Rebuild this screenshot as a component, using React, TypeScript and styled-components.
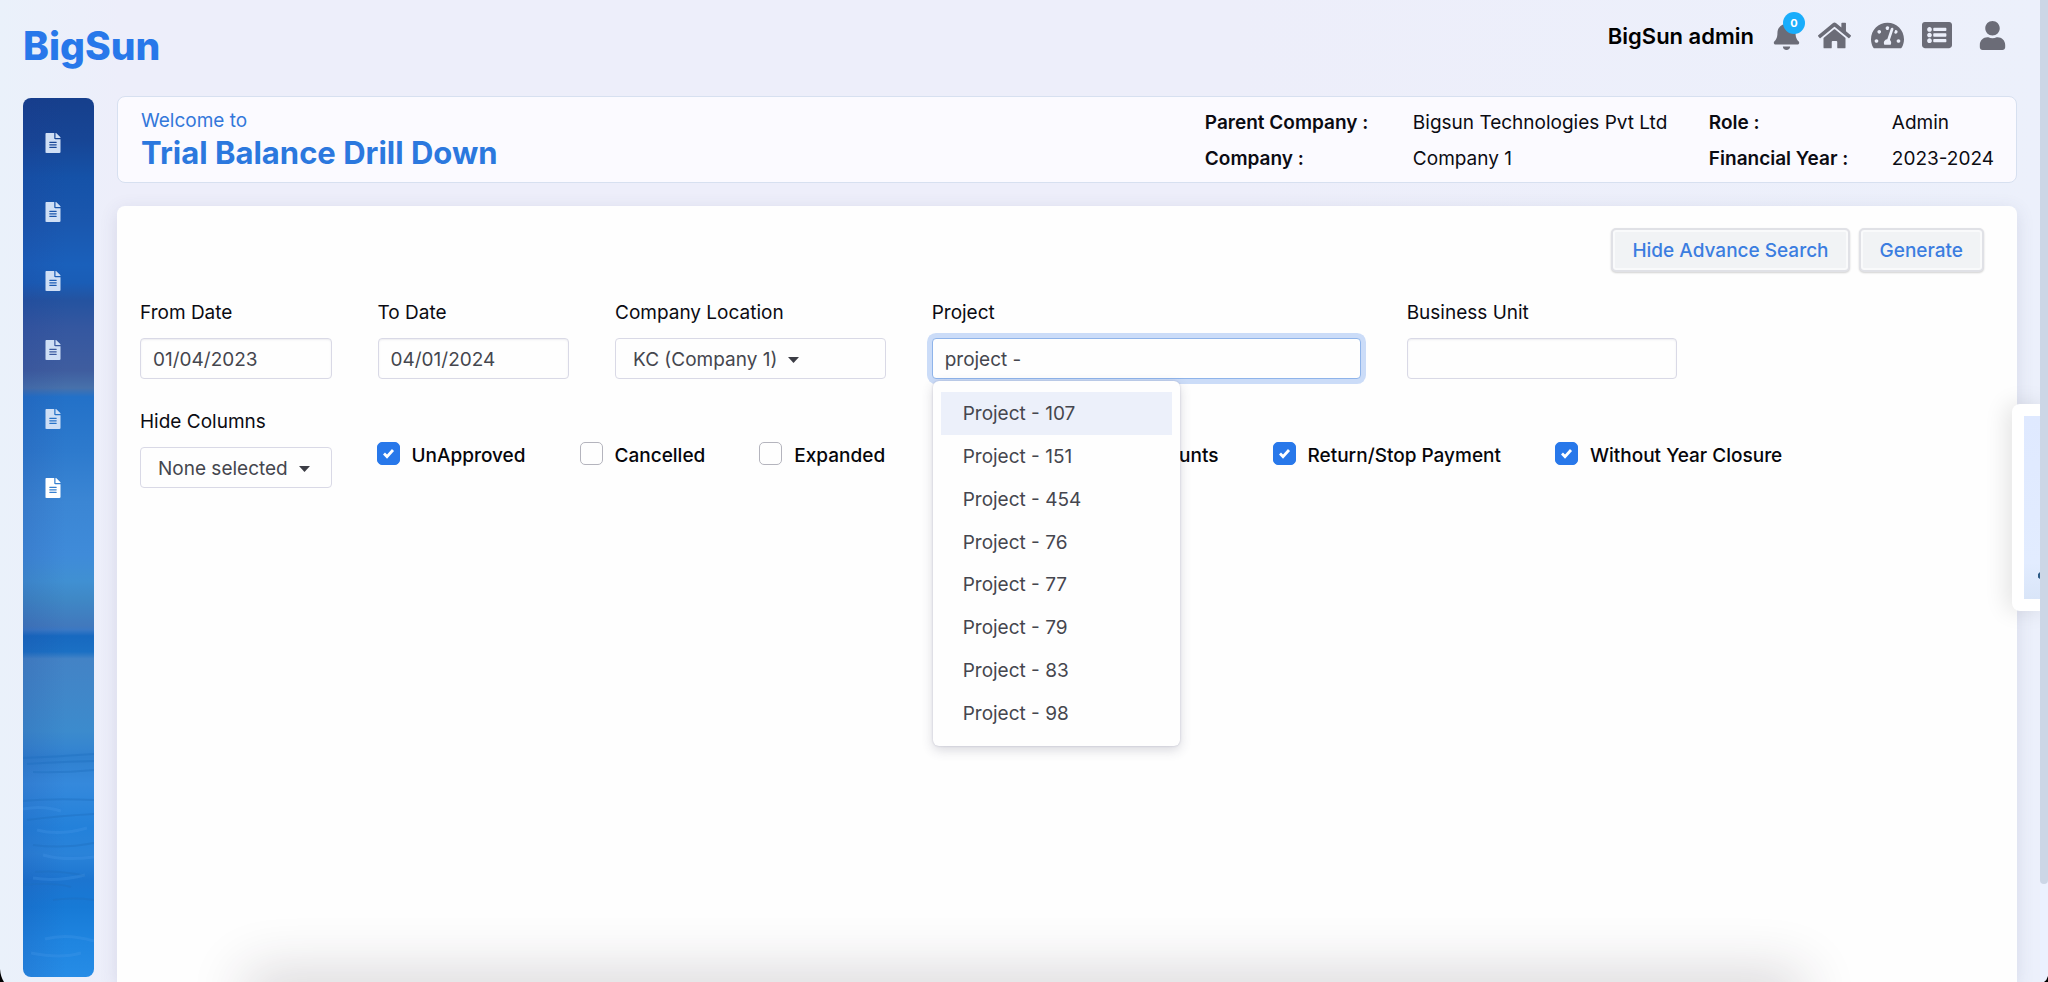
import React, { useState } from "react";
import styled, { createGlobalStyle } from "styled-components";
import { FaBell, FaFileAlt, FaHome, FaListAlt, FaTachometerAlt, FaUser } from "react-icons/fa";

const ink = "#0b0b12";
const fieldInk = "#45464e";

const GlobalStyle = createGlobalStyle`
  *, *::before, *::after { box-sizing: border-box; }
  body {
    margin: 0;
    overflow: hidden;
    background: #ecf0fa;
    color: ${ink};
    font: 400 19px/28px Inter, "Liberation Sans", sans-serif;
  }
  button, input, select { font: inherit; color: inherit; }
`;

const Page = styled.div`
  position: relative;
  display: flex;
  flex-direction: column;
  height: 100vh;
  padding: 0 31px 0 23px;
  overflow: hidden;
  background: linear-gradient(90deg, #eaf1fa 0, #edeefa 120px, #edeefa 60%, #ecf0fb 100%);
`;

const TopBar = styled.header`
  display: flex;
  justify-content: space-between;
  height: 96px;
  flex: none;
`;

const Brand = styled.a`
  padding-top: 22px;
  color: #2878ea;
  font-size: 39px;
  font-weight: 800;
  line-height: 48px;
  text-decoration: none;
`;

const UserNav = styled.nav`
  display: flex;
  align-items: center;
  height: 70px;
  padding-right: 10px;
`;

const UserName = styled.span`
  margin-right: 18px;
  padding-top: 2px;
  color: #000;
  font-size: 22px;
  font-weight: 600;
`;

const IconLink = styled.a<{ $gap?: number }>`
  position: relative;
  display: flex;
  margin-right: ${(p) => p.$gap ?? 0}px;
  color: #6b6c77;
`;

const Badge = styled.span`
  position: absolute;
  top: -9px;
  right: -4px;
  width: 22px;
  height: 22px;
  border-radius: 50%;
  background: #19adfb;
  color: #fff;
  font-size: 11px;
  font-weight: 700;
  line-height: 22px;
  text-align: center;
`;

const Body = styled.div`
  display: flex;
  flex: 1;
  gap: 23px;
  min-height: 0;
`;

const Sidebar = styled.nav`
  position: relative;
  flex: none;
  display: flex;
  flex-direction: column;
  gap: 49px;
  width: 71px;
  margin: 2px 0 5px;
  padding: 35px 0 0 22px;
  border-radius: 8px;
  overflow: hidden;
  background:
    linear-gradient(90deg, rgba(30, 50, 140, 0.14), transparent 60%),
    linear-gradient(
      #163f8c 0, #174696 5%, #1552a8 9%, #1a57ae 14%, #1a60bb 19%, #1a5db6 21%,
      #2453a0 23%, #3457a0 26%, #3f5d9f 31%, #4771ab 33%, #2371c8 34%, #2d7acd 40%,
      #3b86d4 46%, #3f8bd9 52%, #4090d2 55%, #3f88c6 57%, #4179bd 60%, #3a78c4 60.5%,
      #1769c0 61.2%, #1b70c4 63%, #4383c6 63.8%, #4087c9 68%, #3c8bcd 72%,
      #3585d0 74%, #2f80cf 75%, #3589dc 78%, #2381da 83%, #2a83d9 86%, #1c75d0 89%,
      #177ad6 92%, #1f85e0 96%, #268ce6 100%
    );
`;

const Ripples = styled.svg`
  position: absolute;
  left: 0;
  bottom: 0;
`;

const SideLink = styled.a<{ $active?: boolean }>`
  display: flex;
  width: 16px;
  color: ${(p) => (p.$active ? "#fff" : "#cfdff5")};
`;

const Main = styled.main`
  flex: 1;
  display: flex;
  flex-direction: column;
  gap: 23px;
  min-width: 0;
`;

const Welcome = styled.section`
  display: flex;
  justify-content: space-between;
  flex: none;
  height: 87px;
  padding: 8px 22px 0 23px;
  border: 1px solid #d7e0f0;
  border-radius: 8px;
  background: #fbfaff;
`;

const Greeting = styled.p`
  margin: 4px 0 0;
  color: #3377da;
  line-height: 24px;
`;

const Title = styled.h1`
  margin: 0;
  color: #2b78de;
  font-size: 31px;
  font-weight: 700;
  line-height: 40px;
`;

const Facts = styled.dl`
  display: grid;
  grid-template-columns: 208px 296px 183px auto;
  grid-auto-rows: 36px;
  margin: 0;
  line-height: 36px;
`;

const FactName = styled.dt`
  font-weight: 600;
`;

const FactValue = styled.dd`
  margin: 0;
`;

const Panel = styled.section`
  position: relative;
  flex: 1;
  padding-top: 22px;
  border-radius: 8px 8px 0 0;
  background: #fefefe;
  box-shadow: 0 4px 18px rgba(60, 70, 110, 0.13);
`;

const Actions = styled.div`
  display: flex;
  justify-content: flex-end;
  gap: 9px;
  margin-bottom: 27px;
  padding-right: 33px;
`;

const ActionButton = styled.button`
  height: 44px;
  padding: 1px 19px 0;
  border: 2px solid #e0e1e6;
  border-radius: 5px;
  background: #f1f3f5;
  box-shadow: 0 1px 2px rgba(0, 0, 0, 0.18), inset 0 0 0 2px #f9fafb;
  color: #3b7de0;
  font-weight: 500;
`;

const Row = styled.div`
  display: flex;
  margin-bottom: 29px;
`;

const Field = styled.div<{ $share: number }>`
  position: relative;
  flex: 0 0 calc(100% * ${(p) => p.$share} / 24);
  display: flex;
  flex-direction: column;
  gap: 11px;
  padding: 0 23px;
`;

const TextInput = styled.input`
  width: 100%;
  height: 41px;
  padding: 2px 12px 0;
  border: 1px solid #d9d9e6;
  border-radius: 4px;
  outline: none;
  background: #fefefe;
  color: ${fieldInk};
  box-shadow: inset 0 1px 2px rgba(80, 80, 120, 0.1);

  &[aria-expanded="true"] {
    border-color: #8fb4ea;
    box-shadow: 0 0 0 5px #cbdcf8;
  }
`;

const SelectBox = styled.div`
  display: flex;
  align-items: center;
  gap: 11px;
  height: 41px;
  padding: 2px 17px 0;
  border: 1px solid #d9d9e6;
  border-radius: 4px;
  color: ${fieldInk};
`;

const Select = styled.select`
  appearance: none;
  field-sizing: content;
  padding: 0;
  border: 0;
  outline: none;
  background: none;
`;

const Menu = styled.ul`
  position: absolute;
  z-index: 2;
  top: calc(100% + 2px);
  left: 24px;
  display: flex;
  flex-direction: column;
  width: 247px;
  height: 365px;
  margin: 0;
  padding: 11px 8px 12px;
  border-radius: 6px;
  background: #fefefe;
  box-shadow: 0 4px 12px rgba(60, 60, 90, 0.2), 0 0 2px rgba(60, 60, 110, 0.25);
  list-style: none;
`;

const Option = styled.li`
  flex: 1;
  display: flex;
  align-items: center;
  padding: 2px 22px 0;
  color: ${fieldInk};
  white-space: nowrap;

  &[aria-selected="true"] {
    background: #ecf0fa;
  }
`;

const Checks = styled.div`
  display: flex;
  flex: 1;
  gap: 54px;
  padding: 34px 22px 0;
`;

const CheckLabel = styled.label`
  display: flex;
  align-items: flex-start;
  gap: 12px;
  height: 28px;
  color: #06060a;
  font-weight: 500;
  white-space: nowrap;
`;

const Tick = styled.span`
  display: grid;
  place-items: center;

  > * { grid-area: 1 / 1; }
  > svg { pointer-events: none; }
`;

const CheckInput = styled.input`
  appearance: none;
  width: 23px;
  height: 23px;
  margin: 0;
  border: 1px solid #b4b4bd;
  border-radius: 5px;
  background: #fefefe;

  &:checked {
    border-color: #2878ea;
    background: #2878ea;
  }
`;

const SideCard = styled.aside`
  position: absolute;
  z-index: 3;
  right: 0;
  top: 404px;
  width: 36px;
  height: 207px;
  padding: 12px 8px 12px 12px;
  border-radius: 8px 0 0 8px;
  background: #fff;
  box-shadow: -6px 0 22px rgba(0, 0, 0, 0.1);
`;

const SideCardFill = styled.div`
  display: flex;
  justify-content: flex-end;
  align-items: flex-end;
  height: 100%;
  padding-bottom: 20px;
  background: linear-gradient(#dfe9ff, #e2ecff 80%, #d9e5f8);
`;

const ScrollTrack = styled.div`
  position: absolute;
  z-index: 4;
  top: 0;
  right: 0;
  bottom: 0;
  width: 8px;
  background: #ebf1fe;
`;

const ScrollThumb = styled.div`
  height: 90%;
  border-radius: 0 0 4px 4px;
  background: #ccd6e6;
`;

const BottomShade = styled.div`
  position: absolute;
  z-index: 3;
  left: 13%;
  right: 13%;
  bottom: -20px;
  height: 10px;
  box-shadow: 0 0 55px 20px rgba(40, 30, 50, 0.19);
`;

const Corner = styled.svg<{ $side: "left" | "right" }>`
  position: absolute;
  z-index: 5;
  bottom: 0;
  ${(p) => p.$side}: 0;
`;

const Caret = () => (
  <svg width="11" height="6" viewBox="0 0 11 6" aria-hidden="true">
    <path d="M0 0h11L5.5 6z" fill="#3c3d45" />
  </svg>
);

const sideItems = ["Masters", "Transactions", "Vouchers", "Ledgers", "Statements", "Reports"];

const facts = [
  ["Parent Company :", "Bigsun Technologies Pvt Ltd"],
  ["Role :", "Admin"],
  ["Company :", "Company 1"],
  ["Financial Year :", "2023-2024"],
];

const projects = ["107", "151", "454", "76", "77", "79", "83", "98"];

const checks: [string, boolean][] = [
  ["UnApproved", true],
  ["Cancelled", false],
  ["Expanded", false],
  ["Show Zero Value Accounts", false],
  ["Return/Stop Payment", true],
  ["Without Year Closure", true],
];

function Check({ label, initial }: { label: string; initial: boolean }) {
  const [on, setOn] = useState(initial);
  return (
    <CheckLabel>
      <Tick>
        <CheckInput type="checkbox" checked={on} onChange={() => setOn(!on)} />
        {on && (
          <svg width="13" height="11" viewBox="0 0 13 11" aria-hidden="true">
            <path d="M2 5.6 5 8.6 11 2" fill="none" stroke="#fff" strokeWidth="2.8" />
          </svg>
        )}
      </Tick>
      {label}
    </CheckLabel>
  );
}

export default function App() {
  const [project, setProject] = useState("project -");
  return (
    <>
      <GlobalStyle />
      <Page>
        <TopBar>
          <Brand href="#">BigSun</Brand>
          <UserNav aria-label="User">
            <UserName>BigSun admin</UserName>
            <IconLink href="#" $gap={17} aria-label="Notifications">
              <FaBell size={29} />
              <Badge>0</Badge>
            </IconLink>
            <IconLink href="#" $gap={20} aria-label="Home"><FaHome size={33} /></IconLink>
            <IconLink href="#" $gap={18} aria-label="Dashboard"><FaTachometerAlt size={33} /></IconLink>
            <IconLink href="#" $gap={26} aria-label="List"><FaListAlt size={30} /></IconLink>
            <IconLink href="#" aria-label="Profile"><FaUser size={29} /></IconLink>
          </UserNav>
        </TopBar>
        <Body>
          <Sidebar aria-label="Modules">
            <Ripples width="71" height="260" viewBox="0 0 71 260" fill="none" aria-hidden="true">
              <g stroke="#1d6dbd" strokeOpacity="0.4" strokeWidth="2">
                <path d="M0 41q30-1 71-4M4 47q30-2 67-3M10 55q30 1 61-2M0 84q30-3 71-1" />
                <path d="M4 103q30-4 67-6M10 128q30 4 61-2M12 155q25-2 50 4M0 168q30-3 48 2M30 183q20-3 41 0" />
              </g>
              <g stroke="#4a9bea" strokeOpacity="0.25" strokeWidth="3">
                <path d="M0 92q20-4 38 2M14 113q22 6 50-2M20 138q20 6 51 2M10 161q24 4 52-3M22 222q22-6 49 2M8 236q30 6 50 0" />
              </g>
            </Ripples>
            {sideItems.map((item, i) => (
              <SideLink key={item} href="#" aria-label={item} $active={i === sideItems.length - 1}>
                <FaFileAlt size={20} />
              </SideLink>
            ))}
          </Sidebar>
          <Main>
            <Welcome>
              <div>
                <Greeting>Welcome to</Greeting>
                <Title>Trial Balance Drill Down</Title>
              </div>
              <Facts>
                {facts.map(([name, value]) => (
                  <React.Fragment key={name}>
                    <FactName>{name}</FactName>
                    <FactValue>{value}</FactValue>
                  </React.Fragment>
                ))}
              </Facts>
            </Welcome>
            <Panel>
              <Actions>
                <ActionButton type="button">Hide Advance Search</ActionButton>
                <ActionButton type="button">Generate</ActionButton>
              </Actions>
              <Row>
                <Field $share={3}>
                  <label htmlFor="from">From Date</label>
                  <TextInput id="from" defaultValue="01/04/2023" />
                </Field>
                <Field $share={3}>
                  <label htmlFor="to">To Date</label>
                  <TextInput id="to" defaultValue="04/01/2024" />
                </Field>
                <Field $share={4}>
                  <label htmlFor="location">Company Location</label>
                  <SelectBox>
                    <Select id="location"><option>KC (Company 1)</option></Select>
                    <Caret />
                  </SelectBox>
                </Field>
                <Field $share={6}>
                  <label htmlFor="project">Project</label>
                  <TextInput
                    id="project"
                    role="combobox"
                    aria-expanded="true"
                    aria-controls="project-list"
                    value={project}
                    onChange={(e) => setProject(e.target.value)}
                  />
                  <Menu id="project-list" role="listbox">
                    {projects.map((n, i) => (
                      <Option key={n} role="option" aria-selected={i === 0} onClick={() => setProject(`Project - ${n}`)}>
                        Project - {n}
                      </Option>
                    ))}
                  </Menu>
                </Field>
                <Field $share={4}>
                  <label htmlFor="unit">Business Unit</label>
                  <TextInput id="unit" />
                </Field>
              </Row>
              <Row>
                <Field $share={3}>
                  <label htmlFor="columns">Hide Columns</label>
                  <SelectBox>
                    <Select id="columns"><option>None selected</option></Select>
                    <Caret />
                  </SelectBox>
                </Field>
                <Checks>
                  {checks.map(([label, on]) => <Check key={label} label={label} initial={on} />)}
                </Checks>
              </Row>
            </Panel>
          </Main>
        </Body>
        <BottomShade />
        <SideCard>
          <SideCardFill>
            <svg width="2" height="7" viewBox="0 0 2 7" aria-hidden="true">
              <path d="M2 0v7L0 5.500V2z" fill="#2d5b86" />
            </svg>
          </SideCardFill>
        </SideCard>
        <ScrollTrack><ScrollThumb /></ScrollTrack>
        <Corner $side="left" width="4" height="13" viewBox="0 0 4 13" aria-hidden="true">
          <path d="M0 0q.6 8 4 13H0z" fill="#000" />
        </Corner>
        <Corner $side="right" width="4" height="6" viewBox="0 0 4 6" aria-hidden="true">
          <path d="M4 0v6H0q3-2 4-6z" fill="#000" />
        </Corner>
      </Page>
    </>
  );
}
